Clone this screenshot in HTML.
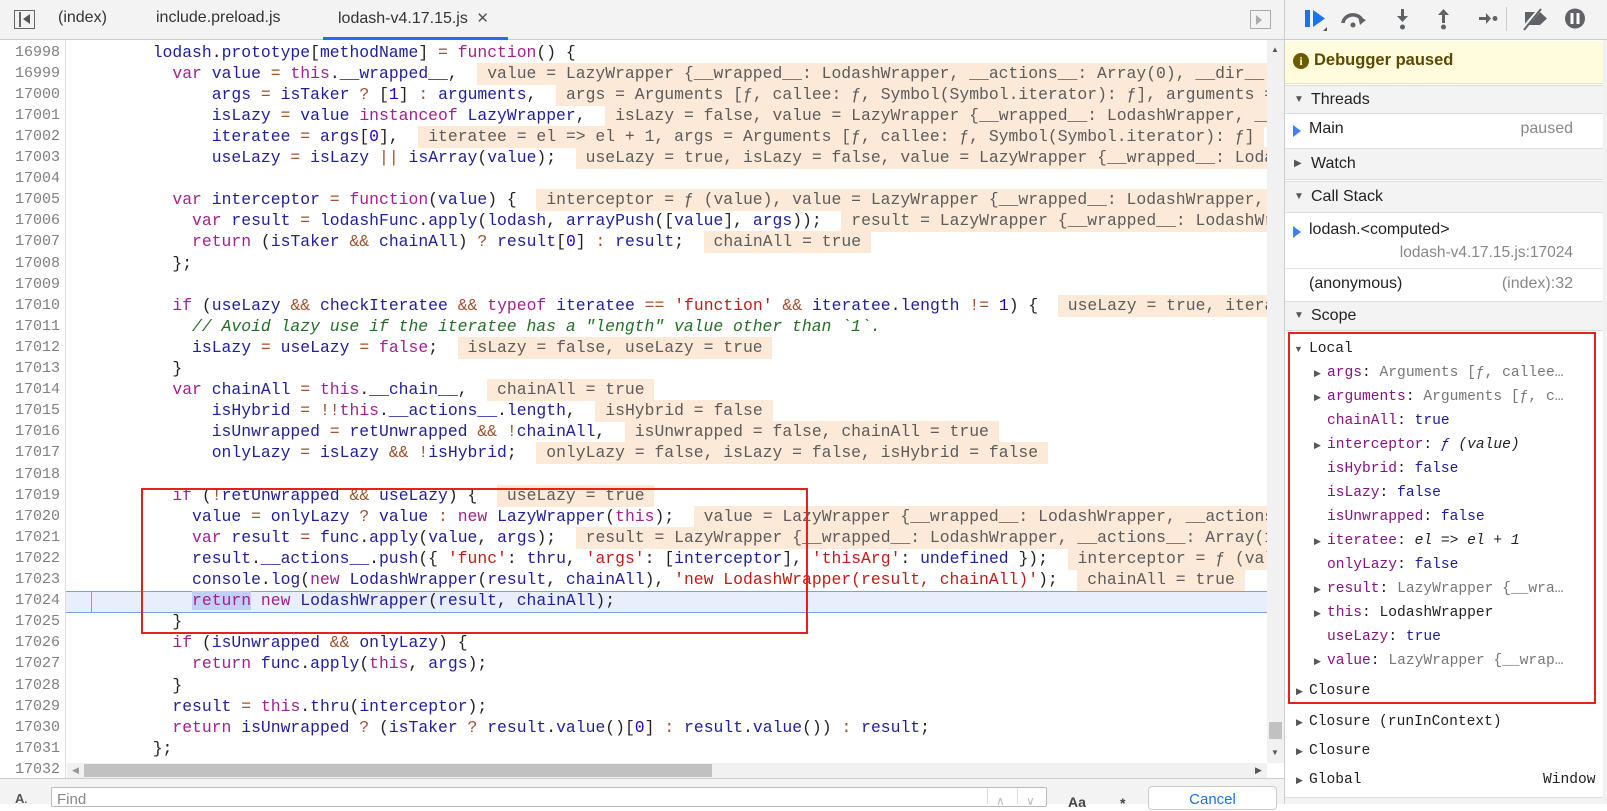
<!DOCTYPE html>
<html><head><meta charset="utf-8"><style>
*{box-sizing:border-box;margin:0;padding:0}
body{width:1607px;height:804px;overflow:hidden;background:#fff;position:relative;font-family:"Liberation Sans",sans-serif}
.abs{position:absolute}
#tabs{left:0;top:0;width:1284px;height:40px;background:#f3f3f3;border-bottom:1px solid #ccc}
.tab{position:absolute;top:9px;font-size:16px;color:#333}
#gut{left:0;top:40px;width:66px;height:740px;border-right:1px solid #ddd;background:#fff}
.ln{position:absolute;left:0;width:60px;text-align:right;font-family:"Liberation Mono",monospace;font-size:15px;color:#808080;height:21.1px;line-height:21.1px}
#code{left:66px;top:40px;width:1201px;height:723px;overflow:hidden}
.row{position:absolute;left:8px;height:21.1px;line-height:21.1px;white-space:pre;font-family:"Liberation Mono",monospace;font-size:16.4px;color:#222}
.k{color:#a0218f}.v{color:#21209c}.o{color:#a0522d}.s{color:#c41a16}.n{color:#1c00cf}.c{color:#236e25;font-style:italic}
.i{background:#fde9d7;color:#5c5c5c;padding:1px 0 2px}
.sb{background:#f1f1f1}
#side{left:1284px;top:0;width:323px;height:804px;background:#fff;border-left:1px solid #ccc}
.hdr{position:absolute;left:0;width:318px;background:#f3f3f3;border-top:1px solid #ddd;border-bottom:1px solid #ddd;font-size:16px;color:#222;padding-left:26px}
.tri{position:absolute;left:9px;font-size:10px;color:#555}
.sc{position:absolute;font-family:"Liberation Mono",monospace;font-size:14.6px;white-space:pre;height:24px;line-height:24px}
.p{color:#881280}.b{color:#1a1aa6}.g{color:#777}.st{position:absolute;font-size:9px;color:#555}
</style></head><body>
<div id="tabs" class="abs">
 <div class="abs" style="left:14px;top:10px;width:21px;height:19px;border:1.5px solid #666"></div>
 <div class="abs" style="left:19px;top:12px;width:1.5px;height:15px;background:#666"></div>
 <div class="abs" style="left:23px;top:14px;width:0;height:0;border-top:5px solid transparent;border-bottom:5px solid transparent;border-right:7px solid #555"></div>
 <div class="tab" style="left:58px">(index)</div>
 <div class="tab" style="left:156px">include.preload.js</div>
 <div class="tab" style="left:338px">lodash-v4.17.15.js <span style="color:#555;font-size:15px;margin-left:4px">✕</span></div>
 <div class="abs" style="left:323px;top:37px;width:185px;height:3px;background:#1a73e8"></div>
 <div class="abs" style="left:1250px;top:10px;width:21px;height:19px;border:1.5px solid #aaa"></div>
 <div class="abs" style="left:1256px;top:15px;width:0;height:0;border-top:5px solid transparent;border-bottom:5px solid transparent;border-left:6px solid #aaa"></div>
</div>
<div id="gut" class="abs">
<div class="ln" style="top:1.5px">16998</div><div class="ln" style="top:22.6px">16999</div><div class="ln" style="top:43.7px">17000</div><div class="ln" style="top:64.8px">17001</div><div class="ln" style="top:85.9px">17002</div><div class="ln" style="top:107px">17003</div><div class="ln" style="top:128.1px">17004</div><div class="ln" style="top:149.2px">17005</div><div class="ln" style="top:170.3px">17006</div><div class="ln" style="top:191.4px">17007</div><div class="ln" style="top:212.5px">17008</div><div class="ln" style="top:233.6px">17009</div><div class="ln" style="top:254.7px">17010</div><div class="ln" style="top:275.8px">17011</div><div class="ln" style="top:296.9px">17012</div><div class="ln" style="top:318px">17013</div><div class="ln" style="top:339.1px">17014</div><div class="ln" style="top:360.2px">17015</div><div class="ln" style="top:381.3px">17016</div><div class="ln" style="top:402.4px">17017</div><div class="ln" style="top:423.5px">17018</div><div class="ln" style="top:444.6px">17019</div><div class="ln" style="top:465.7px">17020</div><div class="ln" style="top:486.8px">17021</div><div class="ln" style="top:507.9px">17022</div><div class="ln" style="top:529px">17023</div><div class="ln" style="top:550.1px">17024</div><div class="ln" style="top:571.2px">17025</div><div class="ln" style="top:592.3px">17026</div><div class="ln" style="top:613.4px">17027</div><div class="ln" style="top:634.5px">17028</div><div class="ln" style="top:655.6px">17029</div><div class="ln" style="top:676.7px">17030</div><div class="ln" style="top:697.8px">17031</div><div class="ln" style="top:718.9px">17032</div>
</div>
<div class="abs" style="left:66px;top:591px;width:1201px;height:22px;background:#e8eefc;border-top:1px solid #7e9fe0;border-bottom:1px solid #7e9fe0"></div>
<div class="abs" style="left:91px;top:591px;width:1px;height:22px;background:#7e9fe0"></div>
<div id="code" class="abs">
<div class="row" style="top:1.5px">        <span class="v">lodash</span>.<span class="v">prototype</span>[<span class="v">methodName</span>] <span class="o">=</span> <span class="k">function</span>() {</div>
<div class="row" style="top:22.6px">          <span class="k">var</span> <span class="v">value</span> <span class="o">=</span> <span class="k">this</span>.<span class="v">__wrapped__</span>,  <span class="i"> value = LazyWrapper {__wrapped__: LodashWrapper, __actions__: Array(0), __dir__: 1, __filtered__: false}</span></div>
<div class="row" style="top:43.7px">              <span class="v">args</span> <span class="o">=</span> <span class="v">isTaker</span> <span class="o">?</span> [<span class="n">1</span>] <span class="o">:</span> <span class="v">arguments</span>,  <span class="i"> args = Arguments [ƒ, callee: ƒ, Symbol(Symbol.iterator): ƒ], arguments = Arguments [ƒ, callee</span></div>
<div class="row" style="top:64.8px">              <span class="v">isLazy</span> <span class="o">=</span> <span class="v">value</span> <span class="k">instanceof</span> <span class="v">LazyWrapper</span>,  <span class="i"> isLazy = false, value = LazyWrapper {__wrapped__: LodashWrapper, __actions__: Array</span></div>
<div class="row" style="top:85.9px">              <span class="v">iteratee</span> <span class="o">=</span> <span class="v">args</span>[<span class="n">0</span>],  <span class="i"> iteratee = el =&gt; el + 1, args = Arguments [ƒ, callee: ƒ, Symbol(Symbol.iterator): ƒ] </span></div>
<div class="row" style="top:107px">              <span class="v">useLazy</span> <span class="o">=</span> <span class="v">isLazy</span> <span class="o">||</span> <span class="v">isArray</span>(<span class="v">value</span>);  <span class="i"> useLazy = true, isLazy = false, value = LazyWrapper {__wrapped__: LodashWrapper</span></div>
<div class="row" style="top:149.2px">          <span class="k">var</span> <span class="v">interceptor</span> <span class="o">=</span> <span class="k">function</span>(<span class="v">value</span>) {  <span class="i"> interceptor = ƒ (value), value = LazyWrapper {__wrapped__: LodashWrapper, __actions__</span></div>
<div class="row" style="top:170.3px">            <span class="k">var</span> <span class="v">result</span> <span class="o">=</span> <span class="v">lodashFunc</span>.<span class="v">apply</span>(<span class="v">lodash</span>, <span class="v">arrayPush</span>([<span class="v">value</span>], <span class="v">args</span>));  <span class="i"> result = LazyWrapper {__wrapped__: LodashWrapper, __actions</span></div>
<div class="row" style="top:191.4px">            <span class="k">return</span> (<span class="v">isTaker</span> <span class="o">&amp;&amp;</span> <span class="v">chainAll</span>) <span class="o">?</span> <span class="v">result</span>[<span class="n">0</span>] <span class="o">:</span> <span class="v">result</span>;  <span class="i"> chainAll = true </span></div>
<div class="row" style="top:212.5px">          };</div>
<div class="row" style="top:254.7px">          <span class="k">if</span> (<span class="v">useLazy</span> <span class="o">&amp;&amp;</span> <span class="v">checkIteratee</span> <span class="o">&amp;&amp;</span> <span class="k">typeof</span> <span class="v">iteratee</span> <span class="o">==</span> <span class="s">'function'</span> <span class="o">&amp;&amp;</span> <span class="v">iteratee</span>.<span class="v">length</span> <span class="o">!=</span> <span class="n">1</span>) {  <span class="i"> useLazy = true, iteratee = el =&gt; el + 1</span></div>
<div class="row" style="top:275.8px">            <span class="c">// Avoid lazy use if the iteratee has a "length" value other than `1`.</span></div>
<div class="row" style="top:296.9px">            <span class="v">isLazy</span> <span class="o">=</span> <span class="v">useLazy</span> <span class="o">=</span> <span class="k">false</span>;  <span class="i"> isLazy = false, useLazy = true </span></div>
<div class="row" style="top:318px">          }</div>
<div class="row" style="top:339.1px">          <span class="k">var</span> <span class="v">chainAll</span> <span class="o">=</span> <span class="k">this</span>.<span class="v">__chain__</span>,  <span class="i"> chainAll = true </span></div>
<div class="row" style="top:360.2px">              <span class="v">isHybrid</span> <span class="o">=</span> <span class="o">!!</span><span class="k">this</span>.<span class="v">__actions__</span>.<span class="v">length</span>,  <span class="i"> isHybrid = false </span></div>
<div class="row" style="top:381.3px">              <span class="v">isUnwrapped</span> <span class="o">=</span> <span class="v">retUnwrapped</span> <span class="o">&amp;&amp;</span> <span class="o">!</span><span class="v">chainAll</span>,  <span class="i"> isUnwrapped = false, chainAll = true </span></div>
<div class="row" style="top:402.4px">              <span class="v">onlyLazy</span> <span class="o">=</span> <span class="v">isLazy</span> <span class="o">&amp;&amp;</span> <span class="o">!</span><span class="v">isHybrid</span>;  <span class="i"> onlyLazy = false, isLazy = false, isHybrid = false </span></div>
<div class="row" style="top:444.6px">          <span class="k">if</span> (<span class="o">!</span><span class="v">retUnwrapped</span> <span class="o">&amp;&amp;</span> <span class="v">useLazy</span>) {  <span class="i"> useLazy = true </span></div>
<div class="row" style="top:465.7px">            <span class="v">value</span> <span class="o">=</span> <span class="v">onlyLazy</span> <span class="o">?</span> <span class="v">value</span> <span class="o">:</span> <span class="k">new</span> <span class="v">LazyWrapper</span>(<span class="k">this</span>);  <span class="i"> value = LazyWrapper {__wrapped__: LodashWrapper, __actions__: Array(1)</span></div>
<div class="row" style="top:486.8px">            <span class="k">var</span> <span class="v">result</span> <span class="o">=</span> <span class="v">func</span>.<span class="v">apply</span>(<span class="v">value</span>, <span class="v">args</span>);  <span class="i"> result = LazyWrapper {__wrapped__: LodashWrapper, __actions__: Array(1), __dir</span></div>
<div class="row" style="top:507.9px">            <span class="v">result</span>.<span class="v">__actions__</span>.<span class="v">push</span>({ <span class="s">'func'</span>: <span class="v">thru</span>, <span class="s">'args'</span>: [<span class="v">interceptor</span>], <span class="s">'thisArg'</span>: <span class="v">undefined</span> });  <span class="i"> interceptor = ƒ (value)</span></div>
<div class="row" style="top:529px">            <span class="v">console</span>.<span class="v">log</span>(<span class="k">new</span> <span class="v">LodashWrapper</span>(<span class="v">result</span>, <span class="v">chainAll</span>), <span class="s">'new LodashWrapper(result, chainAll)'</span>);  <span class="i"> chainAll = true </span></div>
<div class="row" style="top:550.1px">            <span class="k" style="background:#c3cff5">return</span> <span class="k">new</span> <span class="v">LodashWrapper</span>(<span class="v">result</span>, <span class="v">chainAll</span>);</div>
<div class="row" style="top:571.2px">          }</div>
<div class="row" style="top:592.3px">          <span class="k">if</span> (<span class="v">isUnwrapped</span> <span class="o">&amp;&amp;</span> <span class="v">onlyLazy</span>) {</div>
<div class="row" style="top:613.4px">            <span class="k">return</span> <span class="v">func</span>.<span class="v">apply</span>(<span class="k">this</span>, <span class="v">args</span>);</div>
<div class="row" style="top:634.5px">          }</div>
<div class="row" style="top:655.6px">          <span class="v">result</span> <span class="o">=</span> <span class="k">this</span>.<span class="v">thru</span>(<span class="v">interceptor</span>);</div>
<div class="row" style="top:676.7px">          <span class="k">return</span> <span class="v">isUnwrapped</span> <span class="o">?</span> (<span class="v">isTaker</span> <span class="o">?</span> <span class="v">result</span>.<span class="v">value</span>()[<span class="n">0</span>] <span class="o">:</span> <span class="v">result</span>.<span class="v">value</span>()) <span class="o">:</span> <span class="v">result</span>;</div>
<div class="row" style="top:697.8px">        };</div>
</div>
<div class="abs" style="left:141px;top:488px;width:667px;height:146px;border:2px solid #e8201c"></div>
<div class="abs sb" style="left:1267px;top:40px;width:17px;height:723px"></div>
<div class="abs" style="left:1271px;top:45px;font-size:8px;color:#555">▲</div>
<div class="abs" style="left:1269px;top:722px;width:13px;height:17px;background:#c1c1c1"></div>
<div class="abs" style="left:1271px;top:748px;font-size:8px;color:#555">▼</div>
<div class="abs sb" style="left:67px;top:763px;width:1200px;height:15px"></div>
<div class="abs" style="left:72px;top:765px;font-size:9px;color:#999">◀</div>
<div class="abs" style="left:84px;top:764px;width:628px;height:13px;background:#c1c1c1"></div>
<div class="abs" style="left:1255px;top:765px;font-size:9px;color:#555">▶</div>
<div class="abs" style="left:0;top:778px;width:1284px;height:26px;background:#f3f3f3;border-top:1px solid #ccc"></div>
<div class="abs" style="left:15px;top:791px;font-size:13px;font-weight:bold;color:#555">A<span style="font-size:10px">.</span></div>
<div class="abs" style="left:51px;top:787px;width:996px;height:20px;background:#fff;border:1px solid #bbb;border-radius:2px"></div>
<div class="abs" style="left:57px;top:791px;font-size:15px;color:#888">Find</div>
<div class="abs" style="left:987px;top:788px;width:1px;height:16px;background:#ddd"></div>
<div class="abs" style="left:1017px;top:788px;width:1px;height:16px;background:#ddd"></div>
<div class="abs" style="left:996px;top:794px;font-size:12px;color:#bbb">∧</div>
<div class="abs" style="left:1026px;top:794px;font-size:12px;color:#bbb">∨</div>
<div class="abs" style="left:1068px;top:794px;font-size:14px;font-weight:bold;color:#444">Aa</div>
<div class="abs" style="left:1120px;top:795px;font-size:14px;font-weight:bold;color:#444">*</div>
<div class="abs" style="left:1148px;top:786px;width:129px;height:24px;background:#fff;border:1px solid #ccc;border-radius:4px;text-align:center;color:#1a73e8;font-size:15px;padding-top:4px">Cancel</div>
<div id="side" class="abs">
 <div class="abs" style="left:0;top:0;width:323px;height:40px;background:#f3f3f3;border-bottom:1px solid #ccc"></div>
 <svg class="abs" style="left:0;top:0" width="323" height="40">
  <rect x="20" y="10" width="5" height="17" fill="#1a73e8"/><path d="M28 10 L40 18.5 L28 27Z" fill="#1a73e8"/><path d="M38 31 L42 27 L42 31Z" fill="#555"/>
  <path d="M58 23 A10 9 0 0 1 77 20" stroke="#5f6368" stroke-width="3.5" fill="none"/><path d="M73 16 L81 20 L75 25Z" fill="#5f6368"/><circle cx="68" cy="25" r="2.5" fill="#5f6368"/>
  <rect x="116" y="9" width="3" height="10" fill="#5f6368"/><path d="M112 16 L117.5 22 L123 16Z" fill="#5f6368"/><circle cx="117.5" cy="27" r="2.5" fill="#5f6368"/>
  <path d="M153 15 L158.5 9 L164 15Z" fill="#5f6368"/><rect x="157" y="14" width="3" height="9" fill="#5f6368"/><circle cx="158.5" cy="27" r="2.5" fill="#5f6368"/>
  <rect x="194" y="17" width="8" height="3" fill="#5f6368"/><path d="M201 13 L206 18.5 L201 24Z" fill="#5f6368"/><circle cx="210" cy="18.5" r="2.5" fill="#5f6368"/>
  <rect x="221" y="7" width="1" height="24" fill="#ccc"/>
  <path d="M240 12 L255 12 L262 18.5 L255 25 L240 25Z" fill="#5f6368"/><path d="M238 29 L256 8" stroke="#f3f3f3" stroke-width="4"/><path d="M239 30 L256 9" stroke="#5f6368" stroke-width="2"/>
  <circle cx="290" cy="18.5" r="10" fill="#5f6368"/><rect x="285.5" y="13" width="3" height="11" fill="#fff"/><rect x="291.5" y="13" width="3" height="11" fill="#fff"/>
 </svg>
 <div class="abs" style="left:0;top:41px;width:318px;height:43px;background:#fffbdc;border-bottom:1px solid #e8e3c0"></div>
 <div class="abs" style="left:8px;top:53px;width:16px;height:16px;border-radius:50%;background:#6b5a00;color:#fffbdc;font-size:12px;font-weight:bold;text-align:center;line-height:16px;font-family:'Liberation Serif',serif">i</div>
 <div class="abs" style="left:29px;top:51px;font-size:16.5px;font-weight:bold;color:#5c4a00">Debugger paused</div>
 <div class="hdr" style="top:85px;height:29px;line-height:27px"><span class="tri">▼</span>Threads</div>
 <div class="abs" style="left:8px;top:125px;width:0;height:0;border-top:6px solid transparent;border-bottom:6px solid transparent;border-left:8px solid #3b82f6"></div>
 <div class="abs" style="left:24px;top:120px;font-size:16px;color:#222">Main</div>
 <div class="abs" style="right:34px;top:120px;font-size:16px;color:#888">paused</div>
 <div class="hdr" style="top:148px;height:32px;line-height:30px"><span class="tri">▶</span>Watch</div>
 <div class="hdr" style="top:181px;height:32px;line-height:30px"><span class="tri">▼</span>Call Stack</div>
 <div class="abs" style="left:8px;top:226px;width:0;height:0;border-top:6px solid transparent;border-bottom:6px solid transparent;border-left:8px solid #3b82f6"></div>
 <div class="abs" style="left:24px;top:221px;font-size:16px;color:#222">lodash.&lt;computed&gt;</div>
 <div class="abs" style="right:34px;top:244px;font-size:15.5px;color:#888;white-space:nowrap">lodash-v4.17.15.js:17024</div>
 <div class="abs" style="left:0;top:268px;width:318px;height:1px;background:#e4e4e4"></div>
 <div class="abs" style="left:24px;top:275px;font-size:16px;color:#222">(anonymous)</div>
 <div class="abs" style="right:34px;top:275px;font-size:16px;color:#888">(index):32</div>
 <div class="hdr" style="top:301px;height:30px;line-height:28px"><span class="tri">▼</span>Scope</div>
 <div class="sc" style="left:24px;top:337px;color:#222">Local</div><span class="st" style="left:9px;top:344px">▼</span>
 <div class="sc p" style="left:42px;top:361px">args<span style="color:#222">: </span><span class="g">Arguments [ƒ, callee…</span></div><span class="st" style="left:29px;top:368px">▶</span>
 <div class="sc p" style="left:42px;top:385px">arguments<span style="color:#222">: </span><span class="g">Arguments [ƒ, c…</span></div><span class="st" style="left:29px;top:392px">▶</span>
 <div class="sc p" style="left:42px;top:409px">chainAll<span style="color:#222">: </span><span class="b">true</span></div>
 <div class="sc p" style="left:42px;top:433px">interceptor<span style="color:#222">: </span><i class="b">ƒ </i><i style="color:#222">(value)</i></div><span class="st" style="left:29px;top:440px">▶</span>
 <div class="sc p" style="left:42px;top:457px">isHybrid<span style="color:#222">: </span><span class="b">false</span></div>
 <div class="sc p" style="left:42px;top:481px">isLazy<span style="color:#222">: </span><span class="b">false</span></div>
 <div class="sc p" style="left:42px;top:505px">isUnwrapped<span style="color:#222">: </span><span class="b">false</span></div>
 <div class="sc p" style="left:42px;top:529px">iteratee<span style="color:#222">: </span><i style="color:#222">el =&gt; el + 1</i></div><span class="st" style="left:29px;top:536px">▶</span>
 <div class="sc p" style="left:42px;top:553px">onlyLazy<span style="color:#222">: </span><span class="b">false</span></div>
 <div class="sc p" style="left:42px;top:577px">result<span style="color:#222">: </span><span class="g">LazyWrapper {__wra…</span></div><span class="st" style="left:29px;top:584px">▶</span>
 <div class="sc p" style="left:42px;top:601px">this<span style="color:#222">: LodashWrapper</span></div><span class="st" style="left:29px;top:608px">▶</span>
 <div class="sc p" style="left:42px;top:625px">useLazy<span style="color:#222">: </span><span class="b">true</span></div>
 <div class="sc p" style="left:42px;top:649px">value<span style="color:#222">: </span><span class="g">LazyWrapper {__wrap…</span></div><span class="st" style="left:29px;top:656px">▶</span>
 <div class="sc" style="left:24px;top:679px;color:#222">Closure</div><span class="st" style="left:11px;top:686px">▶</span>
 <div class="abs" style="left:3px;top:332px;width:308px;height:372px;border:2px solid #e8201c"></div>
 <div class="sc" style="left:24px;top:710px;color:#222">Closure (runInContext)</div><span class="st" style="left:11px;top:717px">▶</span>
 <div class="sc" style="left:24px;top:739px;color:#222">Closure</div><span class="st" style="left:11px;top:746px">▶</span>
 <div class="sc" style="left:24px;top:768px;color:#222">Global</div><span class="st" style="left:11px;top:775px">▶</span>
 <div class="sc" style="left:258px;top:768px;color:#222">Window</div>
 <div class="abs" style="left:0;top:797px;width:318px;height:7px;background:#f3f3f3;border-top:1px solid #ddd"></div>
 <div class="abs" style="left:318px;top:40px;width:5px;height:764px;background:#f1f1f1"></div>
</div>
</body></html>
